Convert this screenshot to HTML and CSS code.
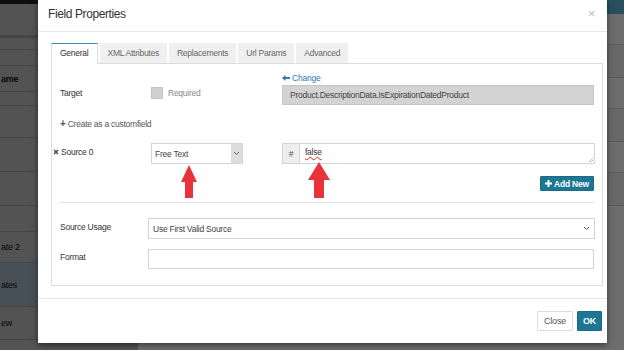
FILE: index.html
```html
<!DOCTYPE html>
<html lang="en">
<head>
  <meta charset="UTF-8">
  <title>Field Properties</title>
  <link rel="stylesheet" href="styles.css">
</head>
<body>
  <div class="app">
    <div class="sidebar">
      <div class="topbar"></div>
      <div class="side-head"></div>
      <div class="side-row h12"></div>
      <div class="side-row h16"></div>
      <div class="side-row h26 bold">ame</div>
      <div class="side-row h14"></div>
      <div class="side-row h32"></div>
      <div class="side-row h34"></div>
      <div class="side-row h34"></div>
      <div class="side-row h26"></div>
      <div class="side-row h31">ate 2</div>
      <div class="side-row h44 active">ates</div>
      <div class="side-row h33">ew</div>
    </div>
    <div class="main">
      <div class="main-bar"></div>
      <div class="main-row"></div>
      <div class="main-row"></div>
      <div class="main-row"></div>
    </div>
  </div>

  <div class="backdrop"></div>

  <div class="modal">
    <div class="modal-header">
      <h4>Field Properties</h4>
      <span class="close">&times;</span>
    </div>

    <div class="modal-body">
      <ul class="tabs">
        <li class="active">General</li>
        <li>XML Attributes</li>
        <li>Replacements</li>
        <li>Url Params</li>
        <li>Advanced</li>
      </ul>

      <div class="tab-panel">
        <div class="row target-row">
          <label class="lbl">Target</label>
          <div class="mid">
            <span class="checkbox"></span>
            <span class="muted">Required</span>
          </div>
          <div class="right">
            <a class="link">
              <svg width="8" height="6" viewBox="0 0 8 6"><path d="M0 3L3.5 0V2H8V4H3.5V6Z" fill="#3179b5"/></svg>
              Change
            </a>
            <div class="readonly">Product.DescriptionData.IsExpirationDatedProduct</div>
          </div>
        </div>

        <div class="create"><b>+</b> Create as a customfield</div>

        <div class="row source-row">
          <label class="lbl source-lbl">
            <svg width="6" height="6" viewBox="0 0 6 6"><path d="M1 1L5 5M5 1L1 5" stroke="#444" stroke-width="1.4"/></svg>
            Source 0
          </label>
          <div class="mid">
            <div class="select">
              <span>Free Text</span>
              <span class="caret">
                <svg width="7" height="5" viewBox="0 0 7 5"><path d="M1 1l2.5 2.5L6 1" fill="none" stroke="#666" stroke-width="1"/></svg>
              </span>
            </div>
          </div>
          <div class="right">
            <div class="input-group">
              <span class="addon">#</span>
              <div class="textarea">
                <span class="spell">false</span>
                <svg class="grip" width="5" height="5" viewBox="0 0 5 5"><path d="M5 1L1 5M5 3L3 5" stroke="#999" stroke-width="0.7"/></svg>
              </div>
            </div>
          </div>
        </div>

        <div class="add-row">
          <button class="btn-primary small">
            <svg width="7" height="7" viewBox="0 0 7 7"><path d="M2.5 0H4.5V2.5H7V4.5H4.5V7H2.5V4.5H0V2.5H2.5Z" fill="#fff"/></svg>
            Add New
          </button>
        </div>

        <hr class="divider">

        <div class="row wide-row">
          <label class="lbl">Source Usage</label>
          <div class="select wide">
            <span>Use First Valid Source</span>
            <svg width="7" height="5" viewBox="0 0 7 5"><path d="M1 1l2.5 2.5L6 1" fill="none" stroke="#555" stroke-width="1"/></svg>
          </div>
        </div>

        <div class="row wide-row">
          <label class="lbl">Format</label>
          <div class="input wide"></div>
        </div>
      </div>
    </div>

    <div class="modal-footer">
      <button class="btn-default">Close</button>
      <button class="btn-primary">OK</button>
    </div>

    <svg class="red-arrow a1" width="18" height="34" viewBox="0 0 18 34">
      <path d="M9 0L17 17H13V33H5V17H1Z" fill="#e8333a"/>
    </svg>
    <svg class="red-arrow a2" width="24" height="37" viewBox="0 0 24 37">
      <path d="M12 0L23 18H17V36H7V18H1Z" fill="#e8333a"/>
    </svg>
  </div>
</body>
</html>
```

FILE: styles.css
```css
* {
  box-sizing: border-box;
}
body {
  margin: 0;
  width: 624px;
  height: 350px;
  overflow: hidden;
  font-family: "Liberation Sans", Arial, sans-serif;
  font-size: 8.5px;
  letter-spacing: -0.25px;
  color: #333;
  position: relative;
}
.app {
  display: flex;
  height: 350px;
  background: #d6d6d6;
}
.sidebar {
  width: 138px;
  background: #b8b8b8;
  color: #111;
  font-size: 9px;
  overflow: hidden;
}
.topbar {
  height: 4px;
  background: #222;
}
.side-head {
  height: 34px;
  border-bottom: 3px solid #999;
}
.side-row {
  border-bottom: 1px solid #9c9c9c;
  display: flex;
  align-items: center;
  padding-left: 1px;
  white-space: nowrap;
}
.side-row.bold {
  font-weight: bold;
}
.h12 { height: 12px; }
.h14 { height: 14px; }
.h16 { height: 16px; }
.h26 { height: 26px; }
.h31 { height: 31px; }
.h32 { height: 32px; }
.h33 { height: 33px; }
.h34 { height: 34px; }
.h44 { height: 44px; }
.side-row.active {
  background: #9fb1c2;
}
.main {
  flex: 1;
  background: #f2f2f2;
}
.main-bar {
  height: 14px;
  background: #5ab0d6;
}
.main-row {
  height: 34px;
  margin-top: 30px;
  border-top: 1px solid #ccc;
  border-bottom: 1px solid #ccc;
  background: #e6e6e6;
}
.backdrop {
  position: absolute;
  inset: 0;
  background: rgba(0, 0, 0, 0.55);
}
.modal {
  position: absolute;
  left: 38px;
  top: 0;
  width: 569px;
  height: 343px;
  background: #fff;
  box-shadow: 0 2px 6px rgba(0, 0, 0, 0.5);
}
.modal-header {
  height: 32px;
  border-bottom: 1px solid #e8e8e8;
  display: flex;
  align-items: center;
  justify-content: space-between;
  padding: 0 12px 4px 10px;
}
.modal-header h4 {
  margin: 0;
  font-size: 12px;
  letter-spacing: -0.4px;
  font-weight: normal;
  color: #333;
}
.close {
  font-size: 13px;
  color: #bbb;
}
.modal-body {
  padding: 11px 4px 0 13px;
}
.tabs {
  list-style: none;
  margin: 0;
  padding: 0;
  display: flex;
  gap: 2px;
  height: 20px;
}
.tabs li {
  padding: 0 8px;
  line-height: 20px;
  background: #f0f0f0;
  color: #666;
}
.tabs li.active {
  background: #fff;
  color: #333;
  border: 1px solid #ddd;
  border-top: 1px solid #3a8fb0;
  border-bottom: none;
  line-height: 19px;
  height: 21px;
  position: relative;
  z-index: 1;
}
.tab-panel {
  border: 1px solid #ddd;
  height: 223px;
  padding: 9px 8px 0 8px;
}
.row {
  display: flex;
}
.lbl {
  width: 91px;
  color: #333;
}
.mid {
  width: 131px;
}
.right {
  flex: 1;
}
.target-row .lbl {
  padding-top: 15px;
}
.target-row .mid {
  display: flex;
  align-items: center;
  gap: 5px;
  padding-top: 7px;
}
.checkbox {
  width: 12px;
  height: 12px;
  background: #d0d0d0;
  border: 1px solid #c4c4c4;
}
.muted {
  color: #888;
}
.link {
  display: block;
  color: #3179b5;
  height: 12px;
}
.readonly {
  height: 20px;
  background: #d3d3d3;
  border: 1px solid #c6c6c6;
  line-height: 18px;
  padding-left: 7px;
  color: #444;
}
.create {
  margin-top: 13px;
  height: 14px;
  color: #555;
}
.create b {
  font-size: 10px;
}
.source-row {
  margin-top: 11px;
}
.source-lbl {
  margin-left: -7px;
  width: 98px;
  padding-top: 4px;
}
.select {
  height: 21px;
  border: 1px solid #d4d4d4;
  display: flex;
  align-items: center;
  justify-content: space-between;
  padding-left: 3px;
  width: 92px;
  color: #444;
}
.select .caret {
  width: 11px;
  height: 100%;
  background: #ddd;
  display: flex;
  align-items: center;
  justify-content: center;
}
.input-group {
  display: flex;
  height: 21px;
  margin-right: -1px;
}
.addon {
  width: 17px;
  background: #eee;
  border: 1px solid #d4d4d4;
  border-right: none;
  display: flex;
  align-items: center;
  justify-content: center;
  color: #555;
}
.textarea {
  flex: 1;
  border: 1px solid #d4d4d4;
  padding: 3px 5px;
  color: #333;
  position: relative;
}
.grip {
  position: absolute;
  right: 1px;
  bottom: 1px;
}
.spell {
  text-decoration: underline wavy #e02020;
  text-decoration-thickness: 1px;
}
.add-row {
  display: flex;
  justify-content: flex-end;
  margin-top: 12px;
  height: 15px;
}
button {
  font-family: "Liberation Sans", Arial, sans-serif;
  letter-spacing: -0.2px;
  border-radius: 1px;
  cursor: pointer;
}
.btn-primary {
  background: #1d7694;
  border: 1px solid #1a6a86;
  color: #fff;
  font-weight: bold;
  font-size: 9px;
  height: 20px;
  padding: 0 5px;
}
.btn-primary.small {
  height: 15px;
  font-size: 8.5px;
  padding: 0 4px;
  display: flex;
  align-items: center;
  gap: 2px;
}
.divider {
  border: none;
  border-top: 1px solid #e5e5e5;
  margin: 11px 0 0 0;
}
.wide-row {
  align-items: center;
  margin-top: 15px;
}
.wide-row + .wide-row {
  margin-top: 10px;
}
.wide-row .lbl {
  width: 88px;
  padding-bottom: 4px;
}
.select.wide {
  flex: 1;
  width: auto;
  height: 21px;
  padding: 0 4px;
  margin-right: -1px;
}
.input.wide {
  flex: 1;
  height: 20px;
  border: 1px solid #d4d4d4;
}
.modal-footer {
  margin-top: 12px;
  border-top: 1px solid #e8e8e8;
  display: flex;
  justify-content: flex-end;
  gap: 4px;
  padding: 12px 5px 0 0;
}
.btn-default {
  background: #fff;
  border: 1px solid #ddd;
  color: #555;
  font-size: 9px;
  height: 20px;
  width: 36px;
  padding: 0;
}
.modal-footer .btn-primary {
  width: 25px;
  padding: 0;
}
.red-arrow {
  position: absolute;
}
.a1 {
  left: 142px;
  top: 165px;
}
.a2 {
  left: 269px;
  top: 162px;
}
```
